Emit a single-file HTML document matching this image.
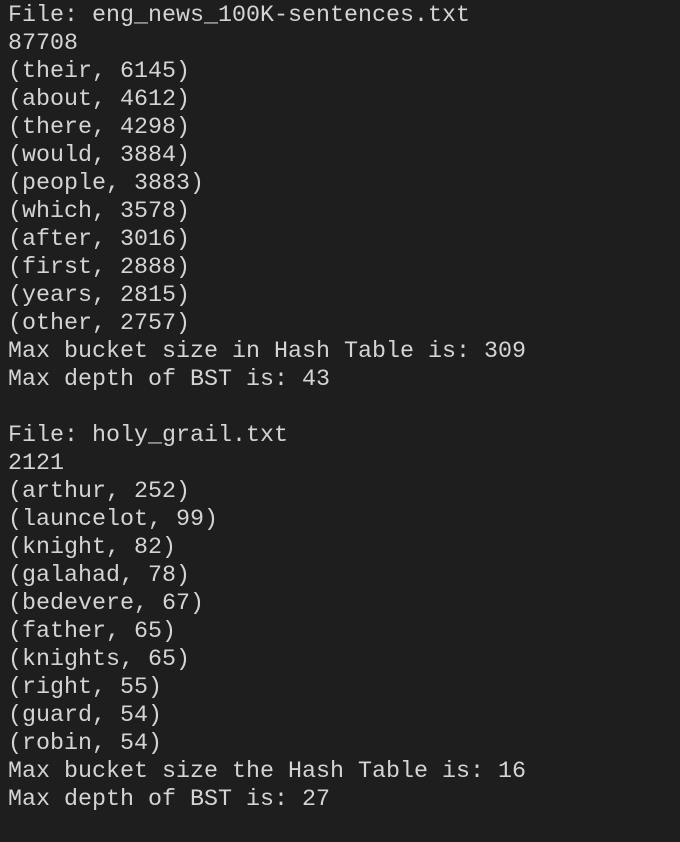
<!DOCTYPE html>
<html><head><meta charset="utf-8"><style>
html,body{margin:0;padding:0;background:#1e1e1e;width:680px;height:842px;overflow:hidden}
pre{margin:0;padding:2px 0 0 8px;font-family:"Liberation Mono",monospace;font-size:23.33px;line-height:28px;color:#d4d4d4}
</style></head><body><pre>File: eng_news_100K-sentences.txt
87708
(their, 6145)
(about, 4612)
(there, 4298)
(would, 3884)
(people, 3883)
(which, 3578)
(after, 3016)
(first, 2888)
(years, 2815)
(other, 2757)
Max bucket size in Hash Table is: 309
Max depth of BST is: 43

File: holy_grail.txt
2121
(arthur, 252)
(launcelot, 99)
(knight, 82)
(galahad, 78)
(bedevere, 67)
(father, 65)
(knights, 65)
(right, 55)
(guard, 54)
(robin, 54)
Max bucket size the Hash Table is: 16
Max depth of BST is: 27</pre></body></html>
